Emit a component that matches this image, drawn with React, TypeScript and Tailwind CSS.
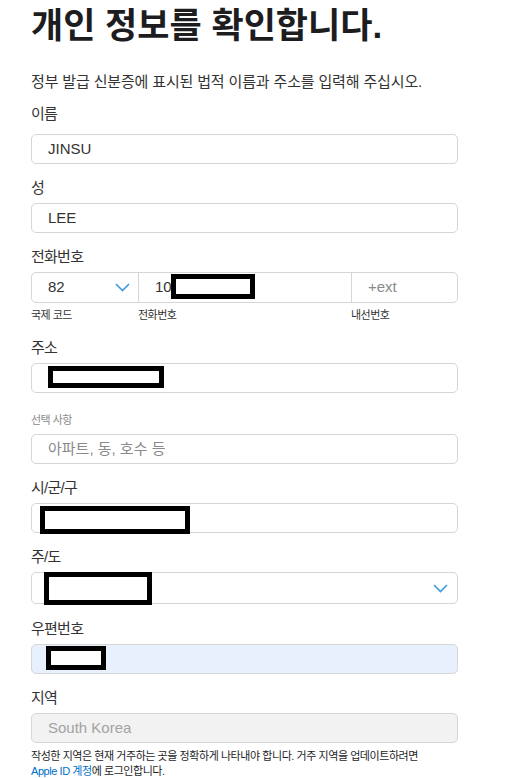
import React from "react";

const font = { fontFamily: '"Liberation Sans", "Noto Sans CJK KR", sans-serif' };

function Chevron() {
  return (
    <svg width="15" height="9" viewBox="0 0 15 9" fill="none" aria-hidden="true">
      <polyline points="1,1 7.5,7.5 14,1" stroke="#3d9be0" strokeWidth="1.6" />
    </svg>
  );
}

// black framed block covering private data
function Redact({ className }: { className: string }) {
  return <span className={`absolute border-[5px] border-black bg-white ${className}`} />;
}

function Label({ children, className = "" }: { children: React.ReactNode; className?: string }) {
  return <div className={`text-[15px] leading-5 text-[#333] tracking-[-0.05em] ${className}`}>{children}</div>;
}

function Field({
  value,
  placeholder,
  className = "",
  children,
}: {
  value?: string;
  placeholder?: string;
  className?: string;
  children?: React.ReactNode;
}) {
  return (
    <div
      className={`relative flex h-[30px] items-center rounded-[5px] border border-[#d6d6d6] px-4 text-[15px] ${className}`}
    >
      {value && <span className="text-[#333]">{value}</span>}
      {placeholder && <span className="text-[#8a8a8a]">{placeholder}</span>}
      {children}
    </div>
  );
}

export default function App() {
  return (
    <div className="min-h-[778px] w-[510px] bg-white" style={font}>
      <div className="ml-[31px] w-[427px] pt-[6px]">
        <h1 className="text-[35px] font-bold leading-10 text-[#1d1d1f]">개인 정보를 확인합니다.</h1>
        <p className="mt-[26px] text-[15px] leading-5 text-[#333] tracking-[-0.01em]">
          정부 발급 신분증에 표시된 법적 이름과 주소를 입력해 주십시오.
        </p>

        <Label className="mt-[12px]">이름</Label>
        <Field value="JINSU" className="mt-[10px]" />

        <Label className="mt-[14px]">성</Label>
        <Field value="LEE" className="mt-[5px]" />

        <Label className="mt-[14px]">전화번호</Label>
        <div className="mt-[5px] flex h-[31px] rounded-[5px] border border-[#d6d6d6] text-[15px]">
          <div className="flex w-[106px] items-center justify-between pl-4 pr-[8px] text-[#333]">
            <span>82</span>
            <Chevron />
          </div>
          <div className="relative flex w-[213px] items-center border-l border-[#d6d6d6] pl-4 text-[#333]">
            <span>10</span>
            <Redact className="left-[32px] top-[1px] h-[25px] w-[84px]" />
          </div>
          <div className="flex flex-1 items-center border-l border-[#d6d6d6] pl-4 text-[#8a8a8a]">+ext</div>
        </div>
        <div className="mt-[4px] flex text-[11px] leading-4 text-[#333] tracking-[-0.05em]">
          <span className="w-[107px]">국제 코드</span>
          <span className="w-[213px]">전화번호</span>
          <span>내선번호</span>
        </div>

        <Label className="mt-[15px]">주소</Label>
        <Field className="mt-[5px]">
          <Redact className="left-[16px] top-[2px] h-[22px] w-[116px]" />
        </Field>

        <div className="mt-[19px] text-[11px] leading-4 text-[#8a8a8a] tracking-[-0.05em]">선택 사항</div>
        <Field placeholder="아파트, 동, 호수 등" className="mt-[6px]" />

        <Label className="mt-[14px]">시/군/구</Label>
        <Field className="mt-[5px]">
          <Redact className="left-[8px] top-[2px] h-[28px] w-[150px]" />
        </Field>

        <Label className="mt-[14px]">주/도</Label>
        <Field className="mt-[5px] h-[32px] justify-end pr-[9px]">
          <Redact className="left-[12px] -top-[1px] h-[33px] w-[108px]" />
          <Chevron />
        </Field>

        <Label className="mt-[15px]">우편번호</Label>
        <Field className="mt-[5px] bg-[#e8f0fe]">
          <Redact className="left-[14px] top-[1px] h-[24px] w-[60px]" />
        </Field>

        <Label className="mt-[14px]">지역</Label>
        <Field className="mt-[5px] bg-[#f2f2f2]">
          <span className="text-[#a3a3a3]">South Korea</span>
        </Field>

        <p className="mt-[6px] text-[11px] leading-[15px] text-[#1d1d1f] tracking-[-0.04em]">
          작성한 지역은 현재 거주하는 곳을 정확하게 나타내야 합니다. 거주 지역을 업데이트하려면
          <br />
          <span className="text-[#0070c9]">Apple ID 계정</span>에 로그인합니다.
        </p>
      </div>
    </div>
  );
}
